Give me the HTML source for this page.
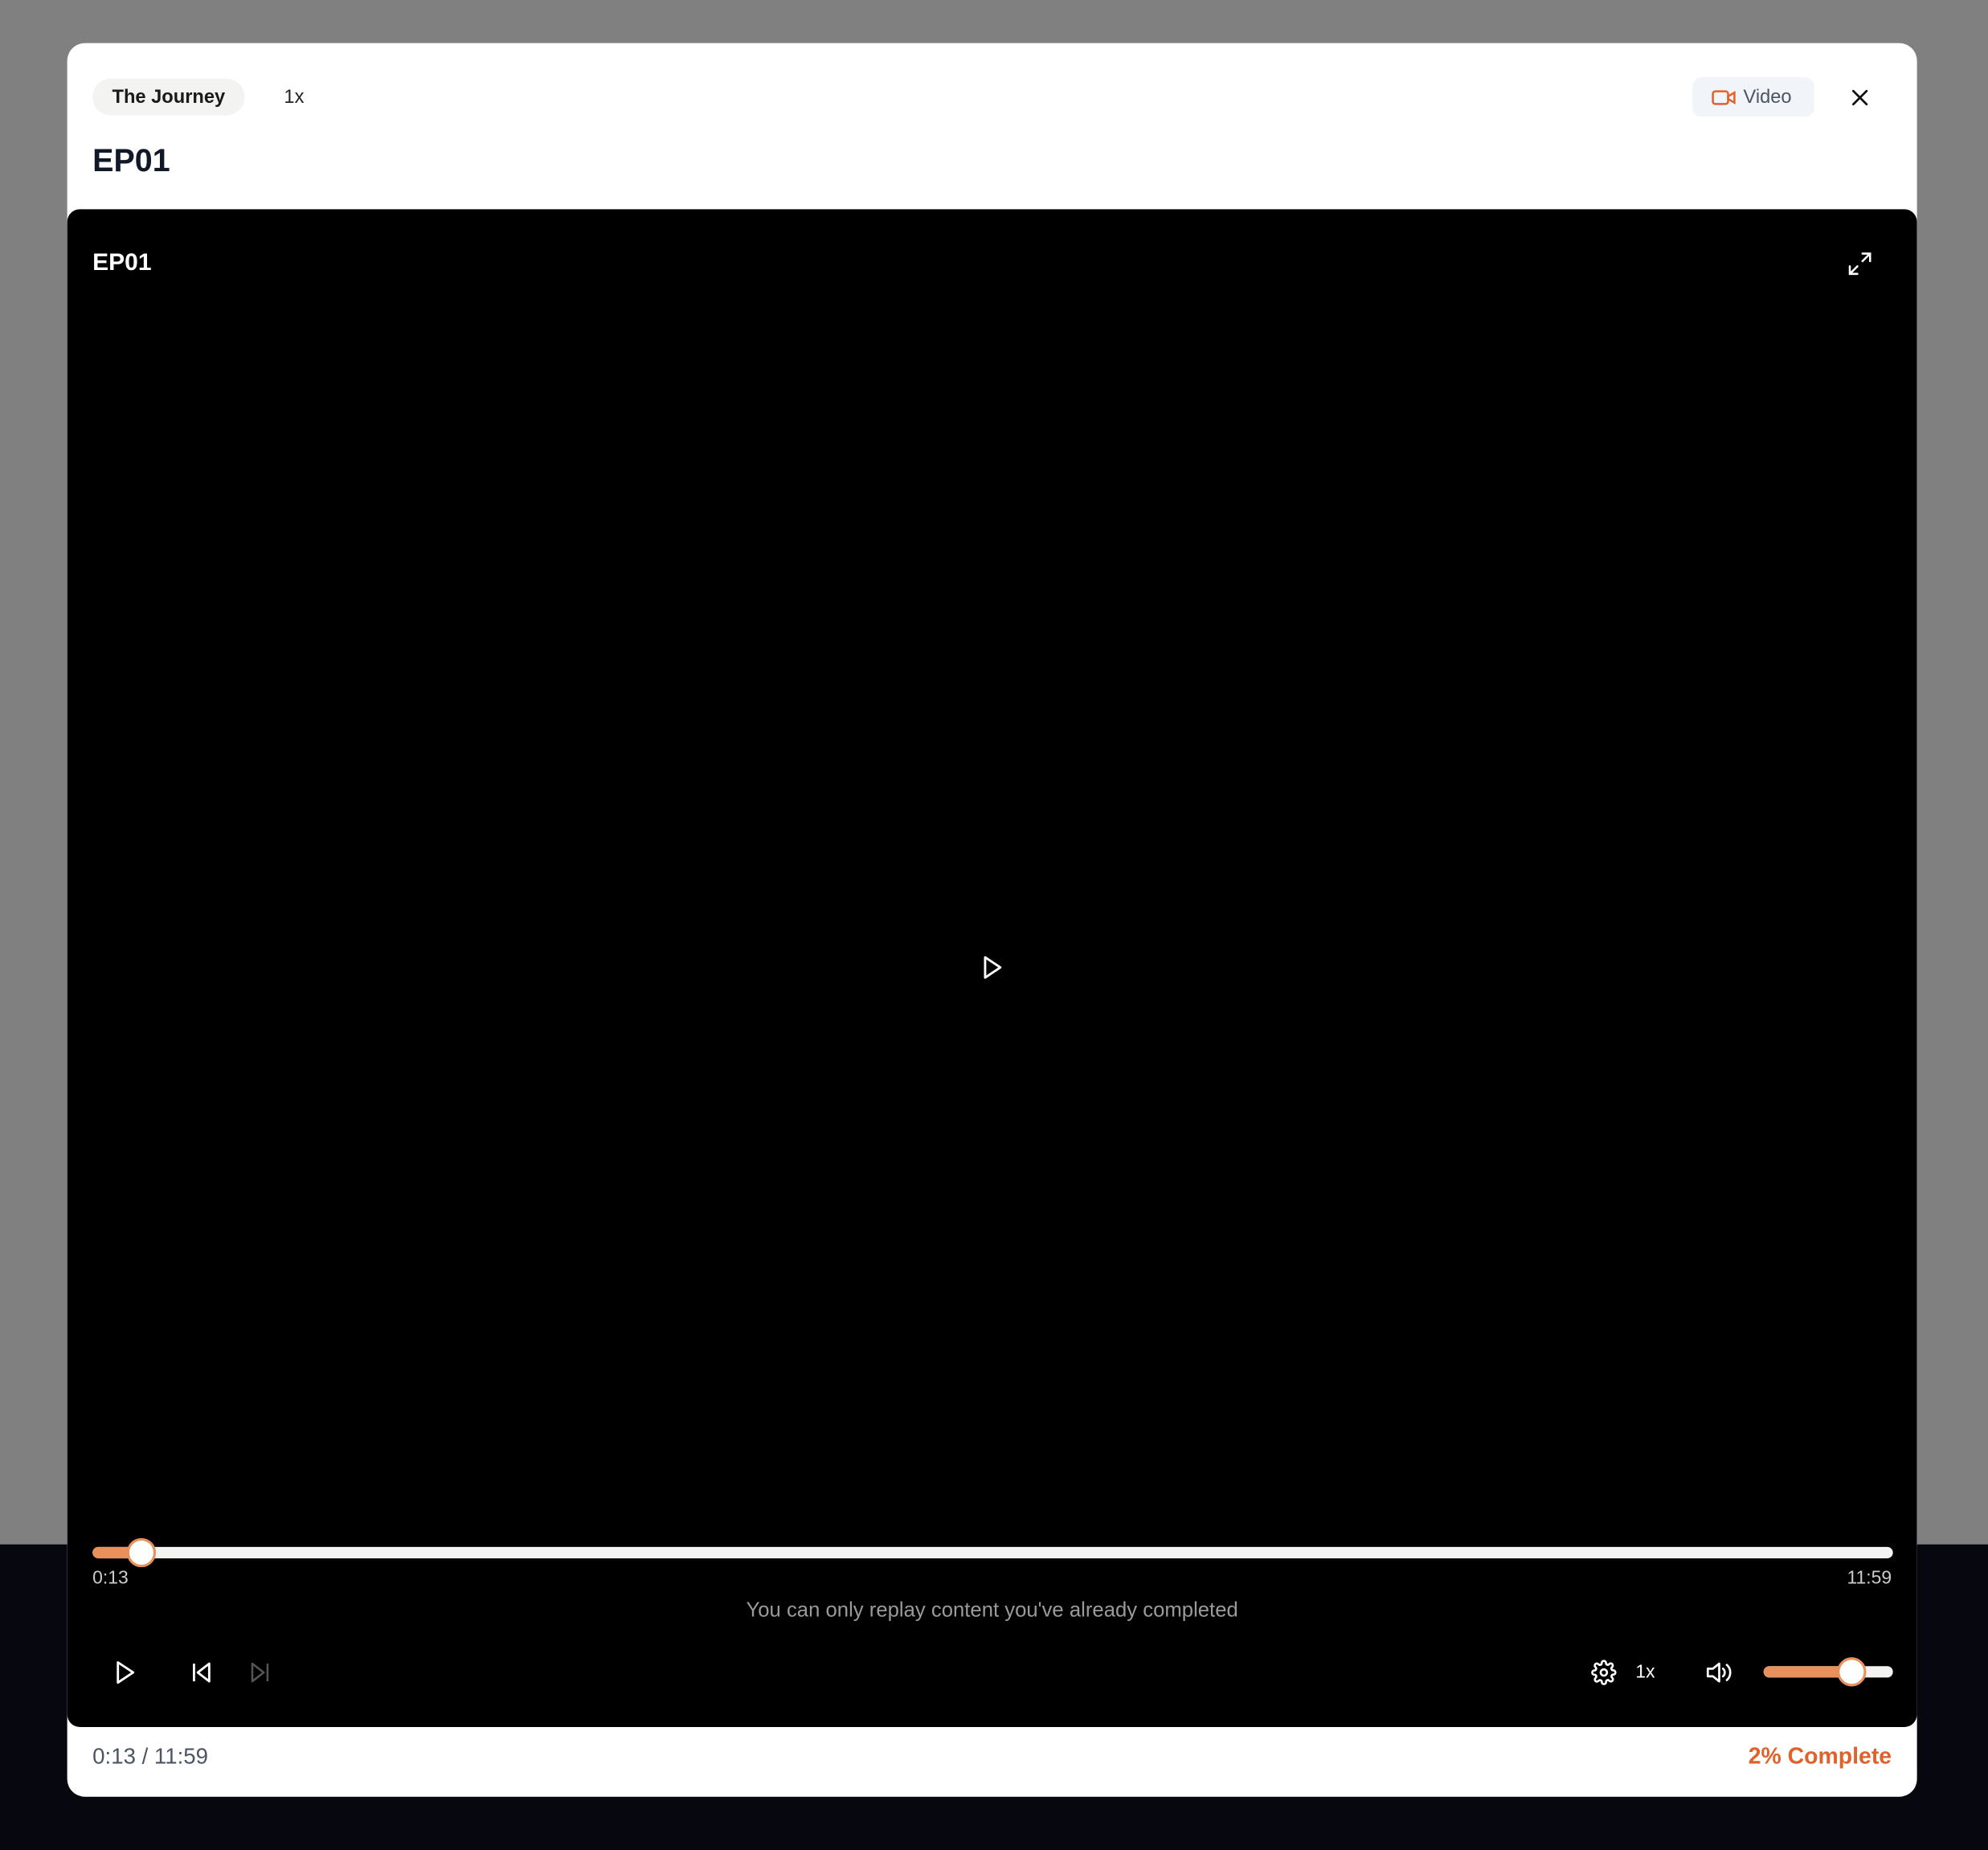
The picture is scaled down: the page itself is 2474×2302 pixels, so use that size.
<!DOCTYPE html>
<html><head><meta charset="utf-8"><style>
*{margin:0;padding:0;box-sizing:border-box}
html,body{width:2474px;height:2302px;overflow:hidden;background:#808080}
#w{position:absolute;left:0;top:0;width:1568px;height:1459px;transform:scale(1.5778);transform-origin:0 0;font-family:"Liberation Sans",sans-serif}
.bgd{position:absolute;left:0;top:1218px;width:1568px;height:241px;background:#07070f}
.m{position:absolute;left:53px;top:34px;width:1459px;height:1383px;background:#fff;border-radius:14px;overflow:hidden}
.a{position:absolute}
</style></head><body><div id="w">
<div class="bgd"></div>
<div class="m">
 <div class="a" style="left:20px;top:28px;width:120px;height:29px;background:#f3f3f2;border-radius:15px;font-size:15px;font-weight:bold;color:#1a1a1a;line-height:30px;text-align:center">The Journey</div>
 <div class="a" style="left:171px;top:34px;font-size:15px;color:#222">1x</div>
 <div class="a" style="left:1282px;top:27px;width:96px;height:31px;background:#f1f4f8;border-radius:7px;font-size:15px;color:#4b5563;line-height:31px;padding-left:40px">Video</div>
 <svg class="a" style="left:1297px;top:35px" width="20" height="16" viewBox="0 0 20 16" fill="none" stroke="#e0622a" stroke-width="1.6"><rect x="1" y="3" width="12" height="10" rx="2"/><path d="M13 7l5-3v8l-5-3z"/></svg>
 <svg class="a" style="left:1407px;top:36px" width="14" height="14" viewBox="0 0 16 16" stroke="#111" stroke-width="2" stroke-linecap="round"><path d="M2 2l12 12M14 2L2 14"/></svg>
 <div class="a" style="left:20px;top:79px;font-size:25px;font-weight:bold;color:#111827">EP01</div>
 <div class="a" style="left:0;top:131px;width:1459px;height:1197px;background:#000;border-radius:10px">
  <div class="a" style="left:20px;top:32px;font-size:19px;font-weight:bold;color:#fff">EP01</div>
  <svg class="a" style="left:1404px;top:33px" width="20" height="20" viewBox="0 0 20 20" fill="none" stroke="#fff" stroke-width="1.6" stroke-linecap="round"><path d="M12 2h6v6M18 2l-6 6M8 18H2v-6M2 18l6-6"/></svg>
  <svg class="a" style="left:721px;top:588px" width="18" height="20" viewBox="0 0 18 20" fill="none" stroke="#fff" stroke-width="1.8" stroke-linejoin="round"><path d="M3 2l12 8-12 8z"/></svg>
  <div class="a" style="left:20px;top:1055px;width:1420px;height:9px;background:#f3f3f2;border-radius:5px"></div>
  <div class="a" style="left:20px;top:1055px;width:40px;height:9px;background:#e8915c;border-radius:5px"></div>
  <div class="a" style="left:47px;top:1048px;width:23px;height:23px;background:#fff;border:2px solid #e8915c;border-radius:50%"></div>
  <div class="a" style="left:20px;top:1072px;font-size:14.5px;color:#ccc">0:13</div>
  <div class="a" style="right:20px;top:1072px;font-size:14.5px;color:#ccc">11:59</div>
  <div class="a" style="left:0;width:1459px;top:1096px;font-size:16.3px;color:#9a9a9a;text-align:center">You can only replay content you've already completed</div>
  <svg class="a" style="left:37px;top:1144px" width="18" height="20" viewBox="0 0 18 20" fill="none" stroke="#fff" stroke-width="1.8" stroke-linejoin="round"><path d="M3 2l12 8-12 8z"/></svg>
  <svg class="a" style="left:97px;top:1145px" width="18" height="18" viewBox="0 0 18 18" fill="none" stroke="#fff" stroke-width="1.8" stroke-linejoin="round"><path d="M3 2v14M15 2L6 9l9 7z"/></svg>
  <svg class="a" style="left:143px;top:1145px" width="18" height="18" viewBox="0 0 18 18" fill="none" stroke="#555" stroke-width="1.6" stroke-linejoin="round"><path d="M15 2v14M3 2l9 7-9 7z"/></svg>
  <svg class="a" style="left:1202px;top:1144px" width="20" height="20" viewBox="0 0 24 24" fill="none" stroke="#fff" stroke-width="2"><circle cx="12" cy="12" r="3"/><path d="M19.4 15a1.7 1.7 0 0 0 .3 1.8l.1.1a2 2 0 1 1-2.8 2.8l-.1-.1a1.7 1.7 0 0 0-1.8-.3 1.7 1.7 0 0 0-1 1.5V21a2 2 0 1 1-4 0v-.1a1.7 1.7 0 0 0-1.1-1.5 1.7 1.7 0 0 0-1.8.3l-.1.1a2 2 0 1 1-2.8-2.8l.1-.1a1.7 1.7 0 0 0 .3-1.8 1.7 1.7 0 0 0-1.5-1H3a2 2 0 1 1 0-4h.1a1.7 1.7 0 0 0 1.5-1.1 1.7 1.7 0 0 0-.3-1.8l-.1-.1a2 2 0 1 1 2.8-2.8l.1.1a1.7 1.7 0 0 0 1.8.3H9a1.7 1.7 0 0 0 1-1.5V3a2 2 0 1 1 4 0v.1a1.7 1.7 0 0 0 1 1.5 1.7 1.7 0 0 0 1.8-.3l.1-.1a2 2 0 1 1 2.8 2.8l-.1.1a1.7 1.7 0 0 0-.3 1.8V9a1.7 1.7 0 0 0 1.5 1H21a2 2 0 1 1 0 4h-.1a1.7 1.7 0 0 0-1.5 1z"/></svg>
  <div class="a" style="left:1237px;top:1146px;font-size:14.5px;color:#fff">1x</div>
  <svg class="a" style="left:1292px;top:1144px" width="22" height="20" viewBox="0 0 22 20" fill="none" stroke="#fff" stroke-width="1.7" stroke-linejoin="round" stroke-linecap="round"><path d="M2 7h4l5-4v14l-5-4H2z"/><path d="M14 7a4 4 0 0 1 0 6M17 4a8 8 0 0 1 0 12"/></svg>
  <div class="a" style="left:1338px;top:1149px;width:102px;height:9px;background:#f3f3f2;border-radius:5px"></div>
  <div class="a" style="left:1338px;top:1149px;width:72px;height:9px;background:#e8915c;border-radius:5px"></div>
  <div class="a" style="left:1396px;top:1142px;width:23px;height:23px;background:#fff;border:2px solid #e8915c;border-radius:50%"></div>
 </div>
 <div class="a" style="left:20px;top:1341px;font-size:17.5px;color:#4b5563">0:13 / 11:59</div>
 <div class="a" style="right:20px;top:1341px;font-size:18px;font-weight:bold;color:#e0622a">2% Complete</div>
</div>
</div></body></html>
